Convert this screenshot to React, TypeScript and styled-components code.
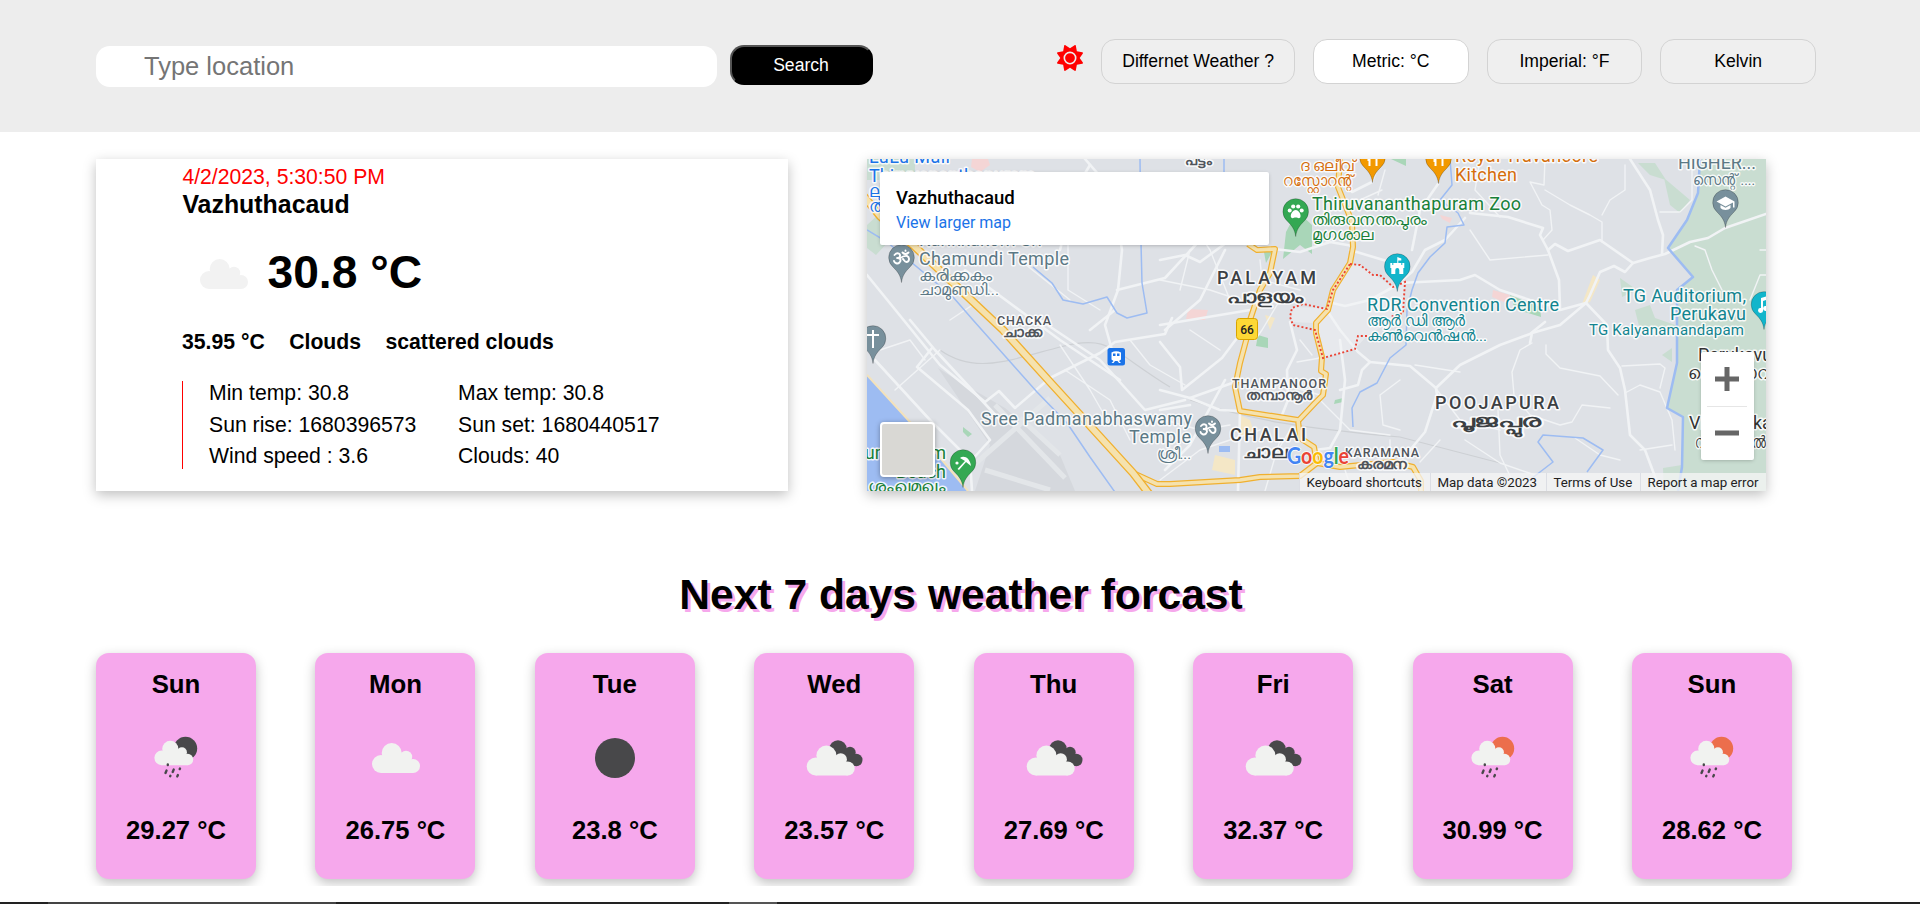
import React from "react";
import styled, { createGlobalStyle, css } from "styled-components";
import { FaSun } from "react-icons/fa6";

const GlobalStyle = createGlobalStyle`
  *, *::before, *::after { box-sizing: border-box; }
  html, body { margin: 0; padding: 0; background: #fff; }
  body { font-family: Arial, "Liberation Sans", sans-serif; color: #000; overflow: hidden; }
  h1, h2, h3, p { margin: 0; }
`;

const Page = styled.div`
  display: flex;
  flex-direction: column;
  height: 904px;
  overflow: hidden;
`;

/* ---------- header ---------- */

const Header = styled.header`
  display: flex;
  justify-content: space-between;
  align-items: flex-start;
  height: 132px;
  padding: 39px 104px 0 96px;
  background: #ededed;
`;

const SearchForm = styled.div`
  display: flex;
  align-items: flex-start;
  gap: 13px;
  padding-top: 6px;
`;

const SearchInput = styled.input`
  width: 621px;
  height: 41px;
  margin-top: 1px;
  padding: 0 48px;
  border: 0;
  border-radius: 14px;
  background: #fff;
  font: 25.5px Arial, "Liberation Sans", sans-serif;
  outline: none;
  &::placeholder { color: #757575; opacity: 1; }
`;

const SearchButton = styled.button`
  width: 143px;
  height: 40px;
  padding: 0 1px 0 0;
  border: 2px outset #000;
  border-radius: 14px;
  background: #000;
  color: #fff;
  font: 17.6px Arial, "Liberation Sans", sans-serif;
`;

const Units = styled.div`
  display: flex;
  align-items: flex-start;
  gap: 18px;
`;

const SunMark = styled(FaSun)`
  width: 26px;
  height: 26px;
  margin-top: 6px;
  color: #f00;
`;

const UnitButton = styled.button<{ $active?: boolean; $wide?: boolean }>`
  width: ${(p) => (p.$wide ? 193.6 : 155.7)}px;
  height: 45px;
  padding: 0;
  border: 1px solid #d3d3d3;
  border-radius: 14px;
  background: ${(p) => (p.$active ? "#fff" : "#efefef")};
  color: #000;
  font: 17.6px Arial, "Liberation Sans", sans-serif;
`;

/* ---------- current weather ---------- */

const Current = styled.main`
  display: flex;
  gap: 79px;
  padding: 27px 0 0 96px;
`;

const raised = css`
  box-shadow: rgba(0, 0, 0, 0.25) 0 4px 12px;
`;

const WeatherCard = styled.section`
  width: 692px;
  height: 332px;
  padding: 6px 0 0 86px;
  background: #fff;
  font-size: 21.2px;
  ${raised}
`;

const DateLine = styled.p`
  height: 24px;
  padding-left: 0.4px;
  line-height: 24px;
  color: #f00;
`;

const Place = styled.h2`
  height: 31px;
  padding-left: 0.4px;
  line-height: 30px;
  font-size: 24.9px;
`;

const TempRow = styled.div`
  display: flex;
  align-items: center;
  height: 106px;
`;

const CurrentIcon = styled.div`
  height: 100px;
  margin: 1px 0 0 -9px;
`;

const Temp = styled.span`
  margin: -2px 0 0 -5.5px;
  font-size: 46.2px;
  font-weight: bold;
`;

const Summary = styled.div`
  display: flex;
  gap: 24.5px;
  height: 32px;
  line-height: 32px;
  font-weight: bold;
`;

const Details = styled.div`
  display: grid;
  grid-template-columns: 249px auto;
  grid-template-rows: 32px 31px 31px;
  align-items: start;
  justify-content: start;
  height: 88px;
  margin-top: 23px;
  padding-left: 26px;
  border-left: 1px solid #f00;
  line-height: 24px;
`;

/* ---------- map ---------- */

const MapFrame = styled.section`
  position: relative;
  width: 899px;
  height: 332px;
  overflow: hidden;
`;

const MapShell = styled.div`
  ${raised}
`;

const MapSvg = styled.svg`
  display: block;
  font-family: Roboto, "Noto Sans", sans-serif;
`;

const InfoBox = styled.div`
  position: absolute;
  left: 13px;
  top: 13px;
  width: 389px;
  height: 73px;
  padding: 15px 16px;
  border-radius: 2px;
  background: #fff;
  box-shadow: rgba(0, 0, 0, 0.3) 0 1px 4px -1px;
  font-family: Roboto, sans-serif;
`;

const InfoTitle = styled.div`
  font-size: 18.6px;
  font-weight: 500;
  line-height: 22px;
`;

const InfoLink = styled.div`
  margin-top: 3px;
  font-size: 16px;
  line-height: 22px;
  color: #1a73e8;
`;

const ZoomBox = styled.div`
  position: absolute;
  left: 834px;
  top: 193px;
  width: 53px;
  height: 108px;
  border-radius: 2px;
  background: #fff;
  box-shadow: rgba(0, 0, 0, 0.3) 0 1px 4px -1px;
`;

const Satellite = styled.div`
  position: absolute;
  left: 13px;
  top: 263px;
  width: 55px;
  height: 55px;
  border: 2px solid #fff;
  border-radius: 4px;
  background: #d9d8d4;
  box-shadow: rgba(0, 0, 0, 0.35) 0 1px 5px;
`;

const Attribution = styled.div`
  position: absolute;
  right: 0;
  bottom: 0;
  display: flex;
  height: 18px;
  font: 13.3px/20px Roboto, sans-serif;
  color: #222;
`;

const AttributionItem = styled.span<{ $w: number }>`
  width: ${(p) => p.$w}px;
  padding-left: 6.5px;
  background: rgba(245, 245, 245, 0.75);
  border-left: 1px solid rgba(215, 218, 224, 0.8);
  white-space: nowrap;
`;

/* ---------- forecast ---------- */

const Title = styled.h1`
  margin-top: 77px;
  height: 53px;
  padding-left: 2px;
  line-height: 52px;
  font-size: 42.6px;
  text-align: center;
  text-shadow: 3px 3px #f6a8ec;
`;

const Forecast = styled.section`
  display: flex;
  justify-content: space-between;
  height: 265px;
  padding: 32px 128px 0 96px;
  overflow: hidden;
`;

const DayCard = styled.article`
  display: flex;
  flex-direction: column;
  align-items: center;
  width: 160px;
  height: 226px;
  padding-top: 15px;
  border-radius: 13px;
  background: #f6a8ec;
  font-size: 25.6px;
  font-weight: bold;
  line-height: 32px;
  ${raised}
`;

const DayName = styled.h3`
  font-size: 25.8px;
`;

const DayIcon = styled.div`
  height: 100px;
  margin: 8px 0 6px;
`;

const Taskbar = styled.footer`
  display: flex;
  height: 2px;
  margin-top: 16px;
  background: #222;
`;

const TaskbarItem = styled.span<{ $w: number; $c: string }>`
  width: ${(p) => p.$w}px;
  background: ${(p) => p.$c};
`;

/* ---------- weather icons ---------- */

type Kind = "rainNight" | "rainDay" | "cloud" | "clear" | "broken";

const CloudShape = ({ fill }: { fill: string }) => (
  <g fill={fill}>
    <circle cx="-14" cy="6" r="9" />
    <circle cx="-3.3" cy="-5" r="10" />
    <circle cx="11" cy="-1" r="6.2" />
    <circle cx="18" cy="8" r="7" />
    <path d="M-14 -2 L12 -4 L18 4 V15 H-14 Z" />
  </g>
);

const WeatherIcon = ({ kind, light = "#f1f2f0" }: { kind: Kind; light?: string }) => (
  <svg width="100" height="100" viewBox="-50 -50 100 100">
    {kind === "clear" && <circle r="20" fill="#48484a" />}
    {kind === "cloud" && <CloudShape fill={light} />}
    {kind === "broken" && (
      <>
        <g fill="#48484a">
          <circle cx="4" cy="-9" r="8.7" />
          <circle cx="16" cy="-5.5" r="5.7" />
          <circle cx="22.3" cy="2" r="6.2" />
          <path d="M4 -6H16L22 0V8H4Z" />
        </g>
        <g transform="translate(-4.3 2.5)">
          <CloudShape fill={light} />
        </g>
      </>
    )}
    {(kind === "rainNight" || kind === "rainDay") && (
      <>
        <circle cx="9.5" cy="-9.5" r="11.7" fill={kind === "rainDay" ? "#ec6e4c" : "#48484a"} />
        <g transform="translate(-3 -5) scale(.81)">
          <CloudShape fill={light} />
        </g>
        <g stroke="#48484a" strokeWidth="2.4" strokeLinecap="round">
          <path d="M-8.2 7v-.6M-10.5 15l1-2.4M-3.3 14l1-2.4M4 10.5l-.3.6M-5.6 17.8l-.2.4M1.3 18.4l.6-1.4" />
        </g>
      </>
    )}
  </svg>
);

/* ---------- map drawing ---------- */

const Label = ({
  x, y, w, size = 18, color = "#5b7885", weight = 400, anchor = "start", stretch, children,
}: {
  x: number; y: number; w?: number; size?: number; color?: string; weight?: number;
  anchor?: "start" | "end"; stretch?: boolean; children: string;
}) => (
  <text
    x={x} y={y} fontSize={size} fontWeight={weight} fill={color} textAnchor={anchor}
    textLength={w} lengthAdjust={stretch ? "spacingAndGlyphs" : "spacing"}
    stroke="#fff" strokeOpacity=".85" strokeWidth="3" strokeLinejoin="round" paintOrder="stroke"
  >
    {children}
  </text>
);

const Local = (p: { x: number; y: number; w?: number; size?: number; color?: string; weight?: number; children: string }) => (
  <Label size={15.5} stretch {...p} />
);

const Pin = ({ x, y, color, children }: { x: number; y: number; color: string; children?: React.ReactNode }) => (
  <g transform={`translate(${x} ${y})`}>
    <path
      d="M0 24.5C-1 17-4 13.5-8.5 9A12.8 12.8 0 1 1 8.5 9C4 13.5 1 17 0 24.5Z"
      fill={color} stroke="#000" strokeOpacity=".22" strokeWidth="1"
    />
    <g fill="#fff">{children}</g>
  </g>
);

const Om = () => (
  <path
    d="M-7-3C-4-6.5 0-4-2-1C-3 .3-5 0-5 0C-1-.3 0 2-2 4.5C-4 6.5-7 5-7.5 3M-2 .5C1-1.5 3-2.5 5.5-2C8.5-1 8 4 5 4C3 4 2.5 2 1.5 1M1-5.5C3-3.5 5-3.5 7-5.5M4-7.5v.4"
    fill="none" stroke="#fff" strokeWidth="1.9" strokeLinecap="round"
  />
);

const NH = [
  "M862 194L880 216L913 245L951 281L1003 330L1050 382L1092 428L1133 473L1150 495",
  "M1133 473L1157 484H1170L1240 480L1260 477L1300 476L1317 463L1314 447L1300 438L1298 420L1240 411L1235 387L1240 363L1247 337L1250 320L1260 290L1270 273L1275 249L1257 250L1248 244",
  "M1340 159L1338 187L1352 222L1353 247L1350 263L1333 290L1328 310L1316 323L1316 333L1322 357L1321 371L1326 374L1323 395L1315 403L1299 420",
  "M1317 463L1340 467L1393 462L1413 467L1421 481V495",
];

const ROADS = [
  "M867 275L906 323L940 365L985 402L999 391L1015 408L1050 378L1100 353L1115 342L1165 334L1172 318",
  "M875 360L930 420L970 460L972 491M932 348L917 367L968 410L990 440L970 462L965 470",
  "M910 320L935 350L1000 420M1040 320L1100 360L1145 410L1185 400",
  "M965 270L1060 340L1120 380M1085 159L1112 190L1122 250L1118 290L1105 325L1112 350",
  "M1117 290L1165 278L1200 240L1245 244M1115 310L1090 330",
  "M1160 260L1185 255L1200 262L1230 240M1165 330L1200 300L1215 270L1225 250",
  "M1248 246L1300 252L1330 242L1353 246M1270 300L1250 310L1160 325",
  "M1160 342L1180 367L1182 390L1222 358L1243 330M1160 390L1190 398L1235 382",
  "M1190 398L1220 410L1240 411L1238 491M1160 410L1190 405",
  "M1225 380L1190 445L1165 470M1290 322L1297 350L1287 370L1288 400L1282 415",
  "M1328 312L1340 330L1358 352L1370 362L1410 366L1436 388L1437 395L1425 432L1410 450",
  "M1436 388L1460 365L1500 345L1530 334L1545 322",
  "M1370 362L1362 370L1358 385L1340 390M1340 340L1345 380L1340 430L1330 448L1315 450",
  "M1328 302L1345 306L1370 300L1395 286L1412 272L1425 250L1445 240L1465 218",
  "M1400 283L1460 280L1475 275L1500 290L1530 300L1560 308L1559 280L1548 250L1540 235L1543 228L1508 217L1470 213",
  "M1548 250L1555 244L1568 251L1600 240L1633 263L1650 258L1665 254L1690 242L1708 238L1725 228L1766 214",
  "M1630 159L1650 190L1658 220L1663 235L1662 254M1633 263L1625 272L1614 266L1600 272L1590 295L1586 303L1560 310",
  "M1586 303L1607 325L1608 350L1620 368L1625 390L1630 435L1645 450L1660 490",
  "M1586 303L1560 325L1532 333L1530 343M1090 165L1075 190L1060 250",
  "M1350 250L1390 262M1380 159L1372 182L1352 192M1438 184L1420 210L1412 250",
];

const LANES = [
  "M1545 159L1544 185L1530 182L1542 205L1550 210L1552 230L1543 240M1545 190L1570 205L1590 215L1602 222L1602 242M1625 165V190L1610 200L1602 215",
  "M1660 212H1680L1692 200V159M1695 246L1705 250L1712 270L1722 290M1766 250L1760 250M1750 300L1760 275H1766",
  "M1532 343L1520 350L1512 372L1514 395L1530 415L1560 425L1572 422L1582 405L1610 408M1546 345V354L1560 368L1600 376L1618 395",
  "M1622 366L1660 364L1665 368L1660 388M1625 393L1640 385L1660 392L1672 420L1675 450",
  "M1498 410L1500 455L1512 480M1465 440L1500 463L1535 475M1400 380L1380 395L1383 425L1400 430M1437 390L1460 420L1500 430",
  "M1165 200L1190 220L1210 250L1230 300M1170 180L1200 230M1160 280L1210 290L1240 300M1190 250L1180 290",
  "M1260 260L1262 280L1300 290M1280 300L1262 330L1255 340M1190 330L1220 350M1165 420L1200 430L1230 425",
  "M1060 345L1090 390L1110 425M1065 370L1110 400L1130 440M1130 340L1150 365L1185 385M1160 480L1200 450L1260 430",
  "M1280 440L1265 491M1290 430L1275 455M1320 400L1350 430L1390 435M1345 470L1352 491M1390 440V462M1440 440L1420 462",
  "M895 390L940 350M880 350L910 340L925 360M950 320L980 300M1020 260L1070 300M1068 245V290L1100 310",
  "M1300 340L1312 355M1297 362L1320 358M1285 385L1320 395M1360 200L1382 190M1385 170L1378 195M1415 365L1460 372",
  "M1470 230L1490 260L1548 255M1480 160L1475 190L1500 217M1575 438L1600 455L1620 460M1640 450L1672 445",
];

const RIVERS = [
  "M867 230L887 242L953 297L973 320L1037 392L1067 423L1090 457L1117 495",
  "M1033 267L1052 283L1063 300L1083 304L1107 297L1117 313L1127 318L1147 313L1142 283L1141 243L1140 159",
  "M1450 159L1452 185L1440 200L1458 213L1464 225L1447 227L1445 243L1430 257L1418 273L1412 290L1407 310L1406 345L1390 358L1377 383L1360 392L1352 408L1353 427",
  "M1224 159V175L1230 195M1527 482L1553 462L1538 442L1543 435L1583 438L1603 450L1587 472",
];

const COAST_RIVER = "M1700 159L1698 193L1687 220L1668 248L1693 277L1677 290L1677 363L1667 408L1683 417L1682 467L1678 491";

const MapDrawing = () => (
  <MapSvg width="899" height="332" viewBox="867 159 899 332">
    <rect x="867" y="159" width="899" height="332" fill="#dee1e6" />
    <path d="M938 368L960 382L1005 408L1060 455L1075 491H975L990 445Z" fill="#d5d8dd" />
    <path d="M968 470L1050 398M995 405L1065 478M1020 418L1060 455M985 470L1050 490" stroke="#e3e6e9" strokeWidth="5" fill="none" />
    <path d="M1315 323L1290 322L1292 307L1328 308L1350 264L1360 265L1393 287L1405 282L1403 313L1367 336L1355 349L1323 358Z" fill="#e7e9ed" />
    <path d="M867 375L910 422L968 491H867Z" fill="#9dbcf2" />
    <path d="M867 375L910 422L968 491" stroke="#f3e2bb" strokeWidth="2" fill="none" />
    <path d={COAST_RIVER + "H1766V159Z"} fill="#c9ddd1" />
    <path d="M1638 163H1655L1666 180L1650 175ZM1664 178L1690 200L1680 213L1670 205ZM1620 278L1637 290L1622 297ZM1635 310L1650 305L1655 318L1690 330H1640ZM1662 355L1672 348V362ZM1663 468L1682 465V491H1664ZM867 225L880 213L890 240L876 255L867 248ZM867 159H915V180H867Z" fill="#c9ddd1" />
    <path d="M1297 211L1312 225L1312 254L1300 245L1283 259L1286 232ZM1264 252H1272L1266 263ZM1258 335L1268 338V348L1256 346ZM1335 400L1343 398V402L1334 404ZM1510 295L1540 307L1541 317L1515 309ZM1391 159H1406V166ZM963 427L972 434L968 437L963 432Z" fill="#a9d6b8" />
    <path d="M972 159H988L990 165L980 172L971 167ZM1188 309L1208 310L1205 320L1186 319ZM1440 215L1452 218L1450 223L1442 219ZM1493 290L1510 295L1506 303L1492 297Z" fill="#f4d5d5" />
    <path d="M1240 415L1250 420L1255 435H1240ZM1215 455L1235 460V475L1212 470ZM1265 315L1275 318L1270 330ZM1593 275L1600 280L1590 302L1582 304Z" fill="#f4e7c6" />
    <rect x="1219" y="446" width="11" height="6" fill="#9dbcf2" />
    <path d="M940 350C975 375 1010 360 1060 347S1110 350 1170 387M1190 400C1250 420 1300 428 1400 437L1500 463" stroke="#cdd0d4" strokeWidth="1.2" fill="none" />
    <g fill="none" stroke="#f1f3f5" strokeLinejoin="round" strokeLinecap="round">
      <g strokeWidth="1.4">{LANES.map((d) => <path key={d} d={d} />)}</g>
      <g strokeWidth="2.6">{ROADS.map((d) => <path key={d} d={d} />)}</g>
    </g>
    <g fill="none" stroke="#9dbcf2" strokeWidth="1.5" strokeLinejoin="round">
      {RIVERS.map((d) => <path key={d} d={d} />)}
      <path d={COAST_RIVER} strokeWidth="2.5" />
    </g>
    <g fill="none" strokeLinejoin="round">
      <g stroke="#f0b02f" strokeWidth="6">{NH.map((d) => <path key={d} d={d} />)}</g>
      <g stroke="#f5e2ae" strokeWidth="3.6">{NH.map((d) => <path key={d} d={d} />)}</g>
      <path d={NH[0]} stroke="#f0b02f" strokeWidth="8.5" />
      <path d={NH[0]} stroke="#f5e2ae" strokeWidth="5.8" />
    </g>
    <path
      d="M1350 264L1360 265L1373 275H1380L1393 287L1405 282L1403 313L1390 317M1367 336H1358L1355 349L1323 358L1315 330L1293 325L1290 317L1292 308L1303 304L1327 309L1333 290L1350 264"
      fill="none" stroke="#ea4335" strokeWidth="1.9" strokeDasharray="2 2.2"
    />

    <Label x={869} y={163} w={81} color="#1a73e8">LuLu Mall</Label>
    <Label x={869} y={182} color="#1a73e8">Thiruvananthapuram</Label>
    <Local x={869} y={197} size={17} color="#1a73e8">ലുലു</Local>
    <Local x={869} y={212} size={17} color="#1a73e8">തിരു</Local>
    <Label x={919} y={246} w={123}>Karikkakom Sri</Label>
    <Label x={919} y={265} w={150}>Chamundi Temple</Label>
    <Local x={919} y={281} w={73}>കരിക്കകം</Local>
    <Local x={919} y={295} w={80}>ചാമുണ്ഡി...</Local>
    <Label x={997} y={325} w={54} size={12.5} weight={500} color="#50555b">CHACKA</Label>
    <Local x={1003} y={337} w={40} size={13} weight={700} color="#50555b">ചാക്ക</Local>
    <Local x={1185} y={165} w={26} size={13} weight={700} color="#50555b">പട്ടം</Local>
    <Local x={1300} y={171} w={55} color="#d56e0c">ദ ഒലീവ്</Local>
    <Local x={1283} y={186} w={70} color="#d56e0c">റസ്റ്റോറന്റ്</Local>
    <Label x={1455} y={162} w={143} color="#d56e0c">Royal Travancore</Label>
    <Label x={1455} y={181} w={62} color="#d56e0c">Kitchen</Label>
    <Label x={1312} y={210} w={209} color="#188038">Thiruvananthapuram Zoo</Label>
    <Local x={1312} y={225} w={115} color="#188038">തിരുവനന്തപുരം</Local>
    <Local x={1312} y={240} w={62} color="#188038">മൃഗശാല</Local>
    <Label x={1217} y={284} w={99} size={18} weight={500} color="#3c4043">PALAYAM</Label>
    <Local x={1227} y={303} w={77} size={18} weight={700} color="#3c4043">പാളയം</Local>
    <Label x={1367} y={311} w={192} color="#12848f">RDR Convention Centre</Label>
    <Local x={1367} y={326} w={98} color="#12848f">ആർ ഡി ആർ</Local>
    <Local x={1367} y={341} w={120} color="#12848f">കൺവെൻഷൻ...</Local>
    <Label x={1678} y={169} w={78}>HIGHER...</Label>
    <Local x={1693} y={185} w={62}>സെന്റ് ....</Local>
    <Label x={1623} y={302} w={123} color="#12848f">TG Auditorium,</Label>
    <Label x={1670} y={320} w={76} color="#12848f">Perukavu</Label>
    <Label x={1589} y={335} w={155} size={15} color="#12848f">TG Kalyanamandapam</Label>
    <Label x={1698} y={361} color="#333" size={18}>Perukavu</Label>
    <Local x={1688} y={379} color="#333" size={17}>പെരുകാവ്</Local>
    <Label x={1689} y={429} w={87} color="#333">Vilavoorkal</Label>
    <Local x={1695} y={448} w={71} color="#333" size={17}>വിളവൂർക്കൽ</Local>
    <Label x={981} y={425} w={211}>Sree Padmanabhaswamy</Label>
    <Label x={1129} y={443} w={62}>Temple</Label>
    <Local x={1157} y={459} w={34}>ശ്രീ...</Local>
    <Label x={946} y={459} anchor="end" color="#188038">Shankumugham</Label>
    <Label x={946} y={478} anchor="end" color="#188038">Beach</Label>
    <Local x={868} y={492} w={78} color="#188038">ശംഖുമുഖം</Local>
    <Label x={1232} y={388} w={94} size={12.5} weight={500} color="#50555b">THAMPANOOR</Label>
    <Local x={1246} y={400} w={66} size={13} weight={700} color="#50555b">തമ്പാനൂർ</Local>
    <Label x={1230} y={441} w={76} size={18} weight={500} color="#3c4043">CHALAI</Label>
    <Local x={1243} y={458} w={45} size={17} weight={700} color="#3c4043">ചാല</Local>
    <Label x={1345} y={457} w={74} size={12.5} weight={500} color="#50555b">KARAMANA</Label>
    <Local x={1357} y={469} w={50} size={13} weight={700} color="#50555b">കരമന</Local>
    <Label x={1435} y={409} w={124} size={18} weight={500} color="#3c4043">POOJAPURA</Label>
    <Local x={1451} y={427} w={90} size={18} weight={700} color="#3c4043">പൂജപ്പുര</Local>

    <rect x="1236.5" y="318.5" width="21" height="21" rx="3" fill="#fdd835" stroke="#d9a400" />
    <text x="1247" y="334" fontSize="12" fontWeight="500" textAnchor="middle" fill="#222">66</text>

    <Pin x={901.5} y={258} color="#78909c"><Om /></Pin>
    <Pin x={1208} y={429} color="#78909c"><Om /></Pin>
    <Pin x={873} y={339} color="#78909c"><path d="M-1-9H1V-5H6V-3H1V9H-1V-3H-6V-5H-1Z" /></Pin>
    <Pin x={1295.7} y={212} color="#34a853">
      <circle cx="-6" cy="-1.5" r="2" /><circle cx="-2.5" cy="-5.5" r="2.1" />
      <circle cx="2.5" cy="-5.5" r="2.1" /><circle cx="6" cy="-1.5" r="2" />
      <path d="M0-2C3-2 6 3 4.5 5.5C3 7 2 5.5 0 5.5S-3 7-4.5 5.5C-6 3-3-2 0-2Z" />
    </Pin>
    <Pin x={1397.3} y={267} color="#12b5cb">
      <path d="M0-10L4-8.5V-6.5H1V-4H4V-2H5V-4H7V1H6V7H2V3A2 2 0 0 0-2 3V7H-6V1H-7V-4H-5V-2H-4V-4H0Z" />
    </Pin>
    <Pin x={1725.5} y={203} color="#78909c">
      <path d="M0-6.5L9-1.5V4.5H7.5V-.5L0 3.5L-9-1.5ZM-5 2L0 4.8L5 2V5C3 7.5-3 7.5-5 5Z" />
    </Pin>
    <Pin x={1764} y={305} color="#12b5cb">
      <path d="M-3-7L4-9V3A2.5 2.5 0 1 1 2 1V-5L-1-4V5A2.5 2.5 0 1 1-3 3Z" />
    </Pin>
    <Pin x={1372.5} y={158} color="#f29900"><path d="M-5-3H-3V3H-5ZM3-3H5V8H3ZM-4 0H-2V8H-4Z" /></Pin>
    <Pin x={1438.5} y={159} color="#f29900"><path d="M-5-3H-3V3H-5ZM3-3H5V7H3ZM-4 0H-2V7H-4Z" /></Pin>
    <Pin x={963} y={463} color="#34a853">
      <path d="M-3-5C1-8 7-5 8 3L3-1L-4 7L-5.5 6L2-2Z" /><circle cx="-6" cy="0" r="1.6" />
    </Pin>
    <rect x="1107.5" y="348" width="17.5" height="17.5" rx="2.5" fill="#1a73e8" />
    <path d="M1111.5 352.5Q1116 350 1121 352.5V359.5L1119 361L1121 363H1119L1117.5 361H1115L1113.5 363H1111.5L1113.5 361L1111.5 359.5ZM1113 353.5V356H1115.5V353.5ZM1117 353.5V356H1119.5V353.5Z" fill="#fff" fillRule="evenodd" />

    <text
      x="1287" y="464" fontSize="23" fontFamily="Lato, sans-serif" fontWeight="700" textLength="62"
      lengthAdjust="spacingAndGlyphs" stroke="#fff" strokeOpacity=".8" strokeWidth="2" paintOrder="stroke"
    >
      <tspan fill="#4285f4">G</tspan><tspan fill="#ea4335">o</tspan><tspan fill="#fbbc04">o</tspan>
      <tspan fill="#4285f4">g</tspan><tspan fill="#34a853">l</tspan><tspan fill="#ea4335">e</tspan>
    </text>
  </MapSvg>
);

/* ---------- page ---------- */

const DAYS: { name: string; kind: Kind; temp: string }[] = [
  { name: "Sun", kind: "rainNight", temp: "29.27 °C" },
  { name: "Mon", kind: "cloud", temp: "26.75 °C" },
  { name: "Tue", kind: "clear", temp: "23.8 °C" },
  { name: "Wed", kind: "broken", temp: "23.57 °C" },
  { name: "Thu", kind: "broken", temp: "27.69 °C" },
  { name: "Fri", kind: "broken", temp: "32.37 °C" },
  { name: "Sat", kind: "rainDay", temp: "30.99 °C" },
  { name: "Sun", kind: "rainDay", temp: "28.62 °C" },
];

export default function App() {
  return (
    <Page>
      <GlobalStyle />
      <Header>
        <SearchForm>
          <SearchInput placeholder="Type location" />
          <SearchButton>Search</SearchButton>
        </SearchForm>
        <Units>
          <SunMark />
          <UnitButton $wide>Differnet Weather ?</UnitButton>
          <UnitButton $active>Metric: °C</UnitButton>
          <UnitButton>Imperial: °F</UnitButton>
          <UnitButton>Kelvin</UnitButton>
        </Units>
      </Header>

      <Current>
        <WeatherCard>
          <DateLine>4/2/2023, 5:30:50 PM</DateLine>
          <Place>Vazhuthacaud</Place>
          <TempRow>
            <CurrentIcon>
              <WeatherIcon kind="cloud" light="#f2f2f2" />
            </CurrentIcon>
            <Temp>30.8 °C</Temp>
          </TempRow>
          <Summary>
            <span>35.95 °C</span>
            <span>Clouds</span>
            <span>scattered clouds</span>
          </Summary>
          <Details>
            <span>Min temp: 30.8</span>
            <span>Max temp: 30.8</span>
            <span>Sun rise: 1680396573</span>
            <span>Sun set: 1680440517</span>
            <span>Wind speed : 3.6</span>
            <span>Clouds: 40</span>
          </Details>
        </WeatherCard>

        <MapShell>
          <MapFrame>
            <MapDrawing />
            <InfoBox>
              <InfoTitle>Vazhuthacaud</InfoTitle>
              <InfoLink>View larger map</InfoLink>
            </InfoBox>
            <Satellite />
            <ZoomBox>
              <svg width="53" height="108" viewBox="0 0 53 108">
                <path d="M14 24.5H38V29.5H14ZM23.5 15H28.5V39H23.5ZM14 78.5H38V83.5H14Z" fill="#666" />
                <path d="M6 54.5H46" stroke="#e6e6e6" />
              </svg>
            </ZoomBox>
            <Attribution>
              <AttributionItem $w={131}>Keyboard shortcuts</AttributionItem>
              <AttributionItem $w={116}>Map data ©2023</AttributionItem>
              <AttributionItem $w={94}>Terms of Use</AttributionItem>
              <AttributionItem $w={126}>Report a map error</AttributionItem>
            </Attribution>
          </MapFrame>
        </MapShell>
      </Current>

      <Title>Next 7 days weather forcast</Title>
      <Forecast>
        {DAYS.map((d, i) => (
          <DayCard key={i}>
            <DayName>{d.name}</DayName>
            <DayIcon>
              <WeatherIcon kind={d.kind} />
            </DayIcon>
            <span>{d.temp}</span>
          </DayCard>
        ))}
      </Forecast>

      <Taskbar>
        <TaskbarItem $w={48} $c="#222" />
        <TaskbarItem $w={288} $c="#444" />
        <TaskbarItem $w={393} $c="#222" />
        <TaskbarItem $w={48} $c="#555" />
      </Taskbar>
    </Page>
  );
}
